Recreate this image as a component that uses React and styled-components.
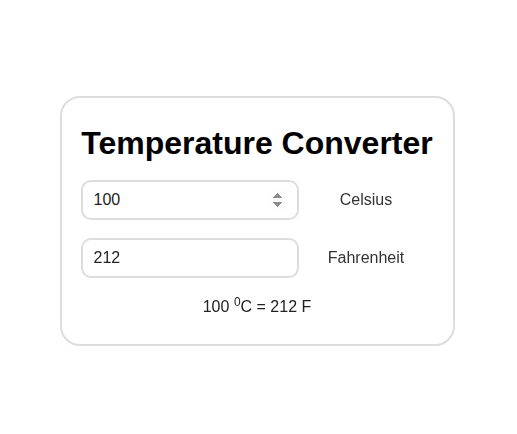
import React, { useState } from 'react';
import styled, { createGlobalStyle } from 'styled-components';

const GlobalStyle = createGlobalStyle`
  html, body {
    margin: 0;
    padding: 0;
    background: #fff;
    font-family: "Liberation Sans", Arial, sans-serif;
  }
`;

const Page = styled.div`
  display: flex;
  justify-content: center;
  padding: 96px 3px 0 0;
`;

const Card = styled.div`
  box-sizing: border-box;
  width: 395px;
  height: 250px;
  padding: 27px 19px 0;
  border: 2px solid #ddd;
  border-radius: 20px;
  display: flex;
  flex-direction: column;
  gap: 18px;
`;

const Title = styled.h1`
  margin: 0;
  font-size: 32px;
  font-weight: bold;
  color: #000;
  text-align: center;
  line-height: 37px;
`;

const Row = styled.div`
  display: flex;
  align-items: center;
`;

const Input = styled.input`
  box-sizing: border-box;
  width: 218px;
  height: 40px;
  padding: 0 12px 0 11px;
  border: 2px solid #ddd;
  border-radius: 10px;
  font-family: "Liberation Sans", Arial, sans-serif;
  font-size: 16px;
  color: #222;
  outline: none;

  &::-webkit-inner-spin-button {
    opacity: ${(p) => (p.$spin ? 1 : 0)};
  }
`;

const Label = styled.span`
  flex: 1;
  text-align: center;
  font-size: 16px;
  color: #333;
`;

const Result = styled.p`
  margin: -1px 0 0;
  text-align: center;
  font-size: 16px;
  color: #222;

  sup {
    font-size: 12px;
  }
`;

export default function App() {
  const [celsius, setCelsius] = useState('100');
  const f = celsius === '' ? '' : Math.round((parseFloat(celsius) * 9) / 5 + 32);

  return (
    <>
      <GlobalStyle />
      <Page>
        <Card>
          <Title>Temperature Converter</Title>
          <Row>
            <Input
              type="number"
              $spin
              autoFocus
              value={celsius}
              onChange={(e) => setCelsius(e.target.value)}
            />
            <Label>Celsius</Label>
          </Row>
          <Row>
            <Input type="text" value={f} readOnly />
            <Label>Fahrenheit</Label>
          </Row>
          <Result>
            {celsius} <sup>0</sup>C = {f} F
          </Result>
        </Card>
      </Page>
    </>
  );
}
